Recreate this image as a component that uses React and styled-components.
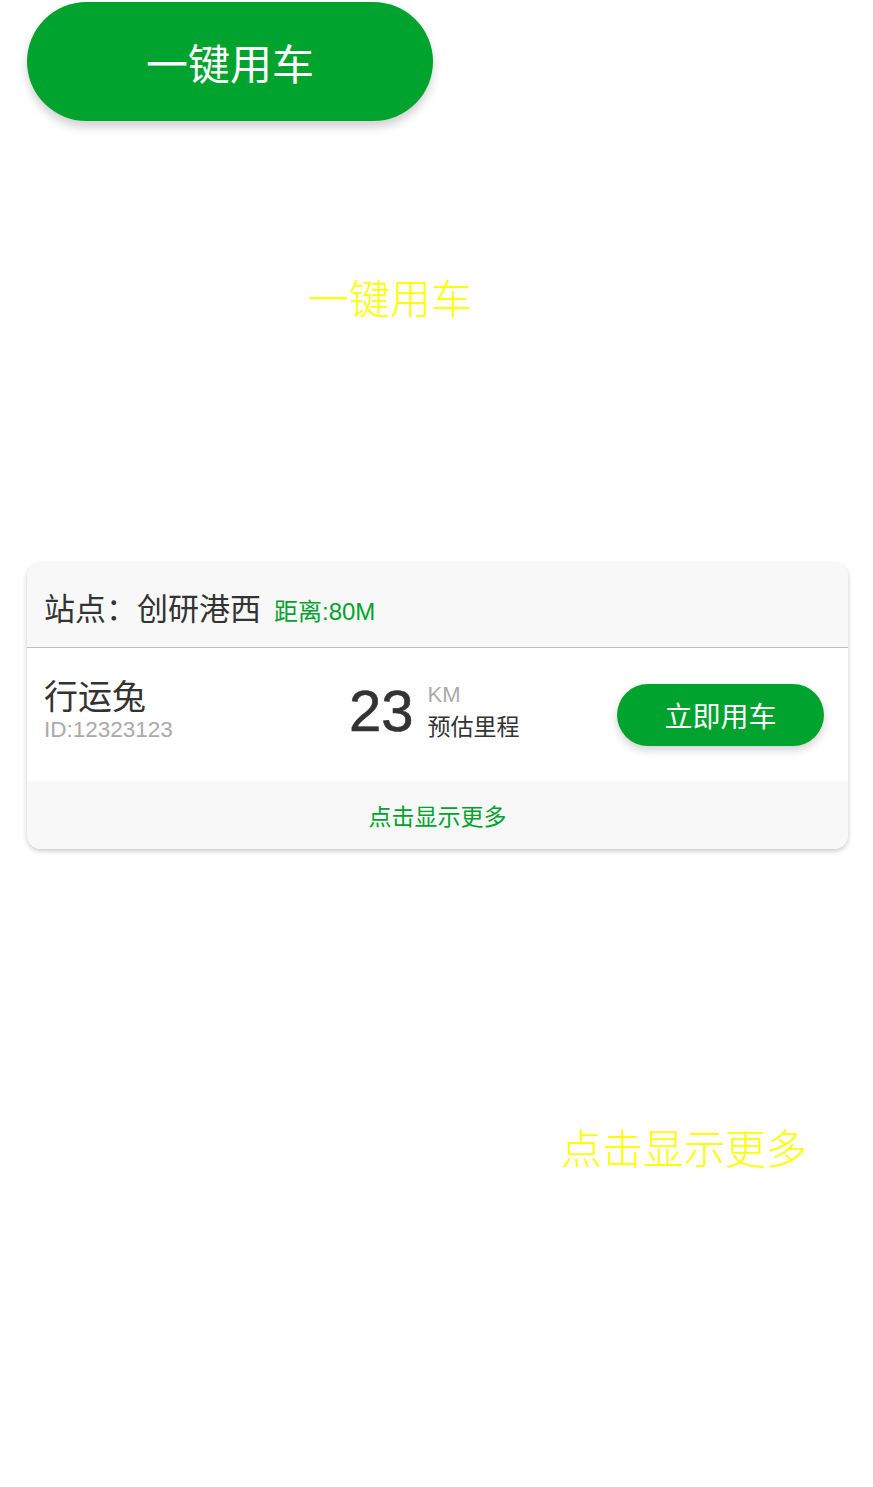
import React from 'react'
import styled, { createGlobalStyle } from 'styled-components'

const green = '#00a32e'

const GlobalStyle = createGlobalStyle`
  body {
    margin: 0;
    background: #fff;
    font-family: "Noto Sans CJK SC", "Liberation Sans", sans-serif;
  }
`

const Page = styled.div`
  width: 873px;
  min-height: 1487px;
  display: flex;
  flex-direction: column;
`

const BigButton = styled.button`
  margin: 2px 0 0 27px;
  width: 406px;
  height: 119px;
  border: none;
  border-radius: 60px;
  background: ${green};
  color: #fff;
  font-family: "Noto Sans CJK SC", sans-serif;
  font-size: 42px;
  box-shadow: 0 6px 10px rgba(0, 0, 0, 0.18);
  cursor: pointer;
`

const Caption = styled.div`
  margin: ${p => p.$top}px 0 0 ${p => p.$left}px;
  color: #ffff00;
  font-family: "Noto Sans CJK SC", sans-serif;
  font-weight: 300;
  font-size: 41px;
  line-height: 40px;
`

const Card = styled.div`
  margin: 247px 0 0 27px;
  width: 821px;
  border-radius: 14px;
  overflow: hidden;
  background: #fff;
  box-shadow: 0 2px 5px rgba(0, 0, 0, 0.22);
`

const Header = styled.div`
  height: 84px;
  padding: 0 17px;
  display: flex;
  align-items: baseline;
  gap: 13px;
  background: #f8f8f8;
  border-bottom: 1px solid #bdbdbd;
  box-sizing: content-box;
`

const Station = styled.span`
  font-size: 31px;
  line-height: 88px;
  color: #333;
`

const Distance = styled.span`
  font-family: "Liberation Sans", "Noto Sans CJK SC", sans-serif;
  font-size: 24px;
  color: ${green};
`

const Body = styled.div`
  height: 133px;
  padding: 0 24px 0 17px;
  display: flex;
  align-items: center;
`

const Vehicle = styled.div`
  width: 305px;
  margin-top: -12px;
  display: flex;
  flex-direction: column;
`

const Name = styled.div`
  font-size: 34px;
  line-height: 42px;
  color: #333;
`

const Id = styled.div`
  font-family: "Liberation Sans", sans-serif;
  font-size: 22.5px;
  line-height: 28px;
  color: #aaa;
`

const Mileage = styled.div`
  flex: 1;
  display: flex;
  align-items: center;
  gap: 14px;
  margin-top: -8px;
`

const Number = styled.div`
  font-family: "Liberation Sans", sans-serif;
  font-size: 58px;
  line-height: 58px;
  color: #333;
  -webkit-text-stroke: 0.6px #333;
`

const Unit = styled.div`
  display: flex;
  flex-direction: column;
`

const Km = styled.div`
  font-family: "Liberation Sans", sans-serif;
  font-size: 22px;
  line-height: 28px;
  color: #aaa;
`

const Label = styled.div`
  font-size: 23px;
  line-height: 32px;
  color: #333;
`

const UseButton = styled.button`
  width: 207px;
  height: 62px;
  border: none;
  border-radius: 31px;
  background: ${green};
  color: #fff;
  font-family: "Noto Sans CJK SC", sans-serif;
  font-size: 28px;
  box-shadow: 0 4px 8px rgba(0, 0, 0, 0.18);
  cursor: pointer;
`

const Footer = styled.div`
  height: 68px;
  display: flex;
  align-items: center;
  justify-content: center;
  background: #f8f8f8;
  font-size: 23px;
  color: ${green};
`

export default function App() {
  return (
    <Page>
      <GlobalStyle />
      <BigButton>一键用车</BigButton>
      <Caption $top={155} $left={308}>一键用车</Caption>
      <Card>
        <Header>
          <Station>站点：创研港西</Station>
          <Distance>距离:80M</Distance>
        </Header>
        <Body>
          <Vehicle>
            <Name>行运兔</Name>
            <Id>ID:12323123</Id>
          </Vehicle>
          <Mileage>
            <Number>23</Number>
            <Unit>
              <Km>KM</Km>
              <Label>预估里程</Label>
            </Unit>
          </Mileage>
          <UseButton>立即用车</UseButton>
        </Body>
        <Footer>点击显示更多</Footer>
      </Card>
      <Caption $top={277} $left={561}>点击显示更多</Caption>
    </Page>
  )
}
